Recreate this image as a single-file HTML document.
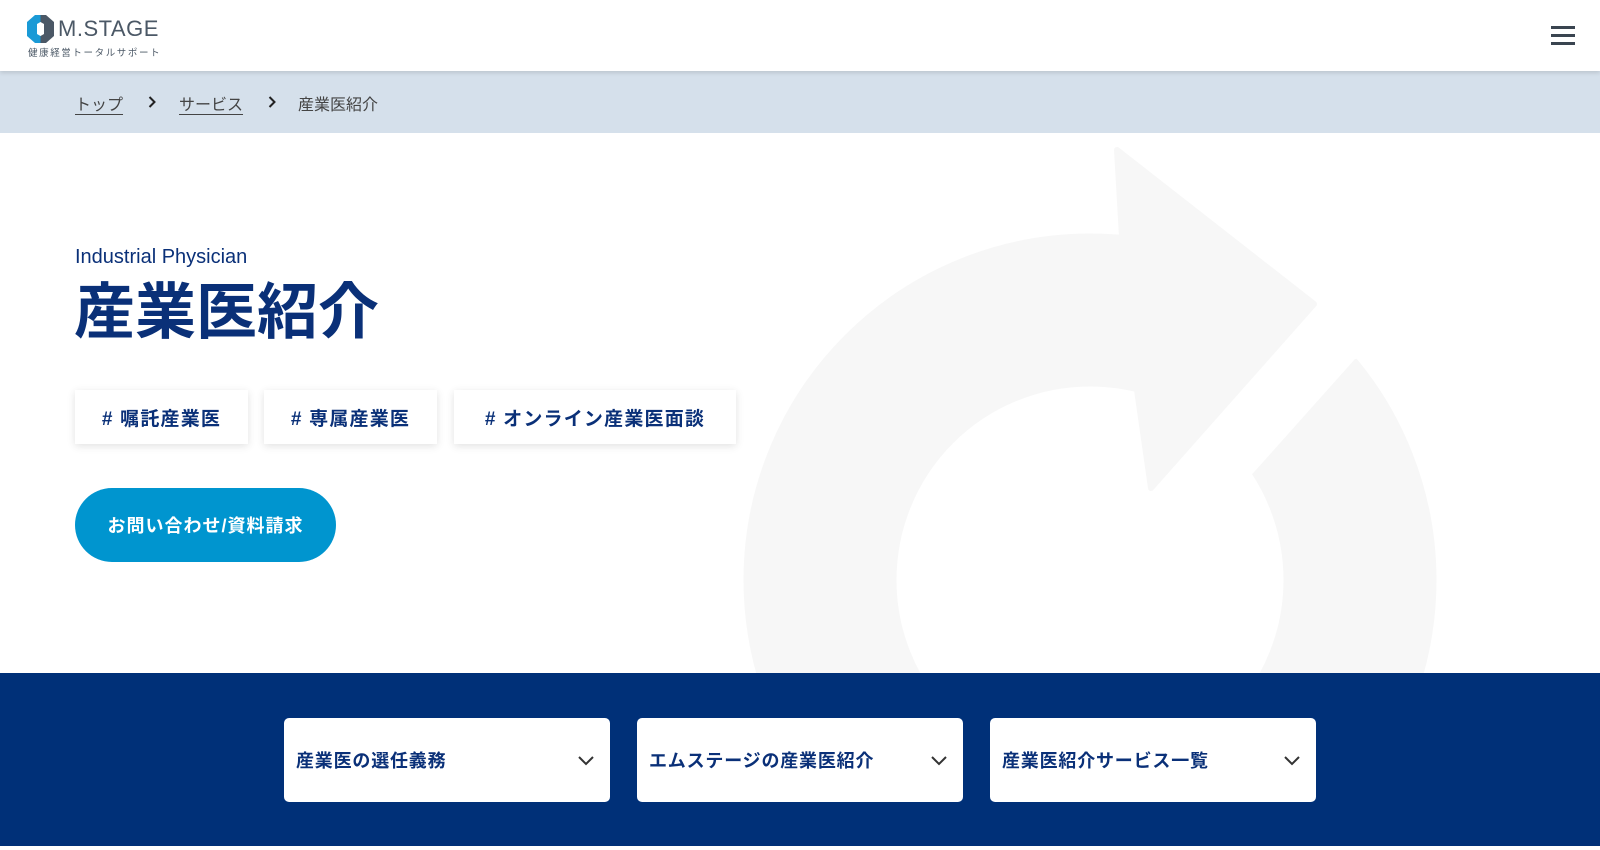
<!DOCTYPE html>
<html><head><meta charset="utf-8"><style>
*{margin:0;padding:0;box-sizing:border-box}
body{width:1600px;height:850px;overflow:hidden;background:#fff;font-family:"Liberation Sans","Noto Sans CJK JP",sans-serif;position:relative}
.hdr{position:absolute;left:0;top:0;width:1600px;height:71px;background:#fff;box-shadow:0 2px 4px rgba(0,0,0,.12);z-index:5}
.bc{position:absolute;top:71px;left:0;width:1600px;height:62px;background:#d5e0eb;font-size:16px;color:#444}
.bc span{position:absolute;top:20px}
.bc svg{position:absolute;top:25px}
.bc u{text-decoration:underline;text-underline-offset:4px}
.navy{color:#0a3078}
.tag{position:absolute;top:390px;height:54px;background:#fff;box-shadow:0 2px 8px rgba(0,0,0,.12);font-size:19px;font-weight:bold;color:#0a3078;display:flex;align-items:center;justify-content:center;letter-spacing:1.2px}
.card{position:absolute;top:718px;width:326px;height:84px;background:#fff;border-radius:5px;font-size:18px;font-weight:bold;color:#0a3078;display:flex;align-items:center;padding-left:12px;letter-spacing:.8px}
.card svg{position:absolute;right:16px;top:38px}
</style></head><body>
<div class="hdr">
 <svg style="position:absolute;left:27px;top:15px" width="27" height="28" viewBox="0 0 27 28">
  <polygon points="8,0 13.5,0 13.5,7 10,9 10,19 13.5,21 13.5,28 8,28 0,21 0,7" fill="#1a9ad6"/>
  <polygon points="13.5,0 19,0 27,7 27,21 19,28 13.5,28 13.5,21 17,19 17,9 13.5,7" fill="#4b5866"/>
 </svg>
 <div style="position:absolute;left:58px;top:16px;font-size:22px;color:#4b5866;letter-spacing:.5px">M.STAGE</div>
 <div style="position:absolute;left:28px;top:45px;font-size:9.5px;color:#4b5866;letter-spacing:1.6px">健康経営トータルサポート</div>
 <div style="position:absolute;left:1551px;top:26px;width:24px;height:3px;background:#3a4550"></div>
 <div style="position:absolute;left:1551px;top:34px;width:24px;height:3px;background:#3a4550"></div>
 <div style="position:absolute;left:1551px;top:42px;width:24px;height:3px;background:#3a4550"></div>
</div>
<div class="bc">
 <span style="left:75px"><u>トップ</u></span>
 <svg style="left:148px" width="8" height="12" viewBox="0 0 8 12"><path d="M1.5 1l5 5-5 5" fill="none" stroke="#222" stroke-width="2"/></svg>
 <span style="left:179px"><u>サービス</u></span>
 <svg style="left:268px" width="8" height="12" viewBox="0 0 8 12"><path d="M1.5 1l5 5-5 5" fill="none" stroke="#222" stroke-width="2"/></svg>
 <span style="left:298px">産業医紹介</span>
</div>
<svg style="position:absolute;left:0;top:133px" width="1600" height="540" viewBox="0 133 1600 540">
 <circle cx="1090" cy="580" r="270" fill="none" stroke="#f7f7f7" stroke-width="153"/>
 <polygon points="1314,230 1600,230 1600,340 1355,359 1255,471 1110,620 1151,488 1314,304" fill="#fff"/>
 <polygon points="1117,150 1314,304 1151,488 1137,390 1122,237" fill="#f7f7f7" stroke="#f7f7f7" stroke-width="6" stroke-linejoin="round"/>
</svg>
<div class="navy" style="position:absolute;left:75px;top:246px;font-size:20px">Industrial Physician</div>
<div class="navy" style="position:absolute;left:74px;top:276px;font-size:61px;font-weight:bold;line-height:72px">産業医紹介</div>
<div class="tag" style="left:75px;width:173px"># 嘱託産業医</div>
<div class="tag" style="left:264px;width:173px"># 専属産業医</div>
<div class="tag" style="left:454px;width:282px"># オンライン産業医面談</div>
<div style="position:absolute;left:75px;top:488px;width:261px;height:74px;border-radius:37px;background:#0095cf;color:#fff;font-size:18px;font-weight:bold;display:flex;align-items:center;justify-content:center;letter-spacing:1px">お問い合わせ/資料請求</div>
<div style="position:absolute;left:0;top:673px;width:1600px;height:173px;background:#003078"></div>
<div class="card" style="left:284px">産業医の選任義務<svg width="16" height="10" viewBox="0 0 16 10"><path d="M1 1l7 7 7-7" fill="none" stroke="#333" stroke-width="2"/></svg></div>
<div class="card" style="left:637px">エムステージの産業医紹介<svg width="16" height="10" viewBox="0 0 16 10"><path d="M1 1l7 7 7-7" fill="none" stroke="#333" stroke-width="2"/></svg></div>
<div class="card" style="left:990px">産業医紹介サービス一覧<svg width="16" height="10" viewBox="0 0 16 10"><path d="M1 1l7 7 7-7" fill="none" stroke="#333" stroke-width="2"/></svg></div>
</body></html>
